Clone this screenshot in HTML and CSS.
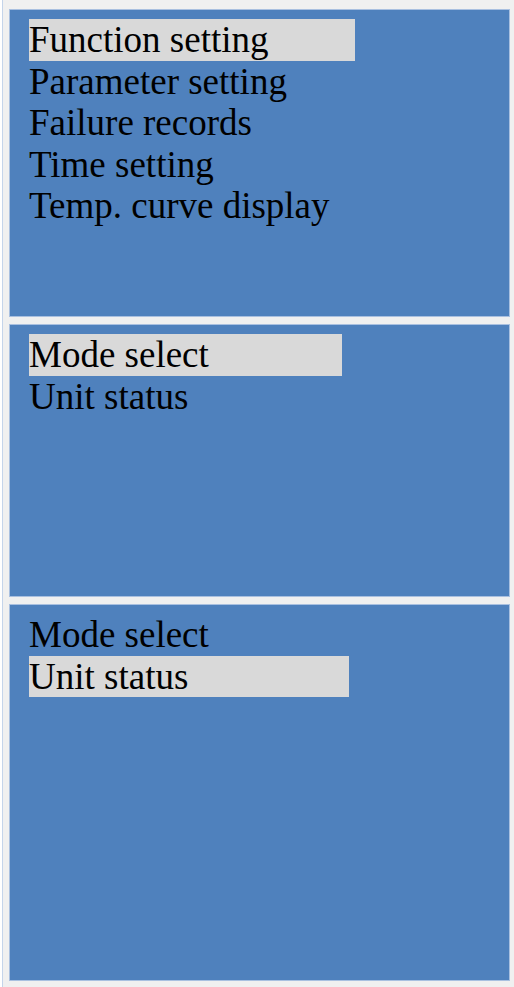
FILE: index.html
```html
<!DOCTYPE html>
<html lang="en">
<head>
    <meta charset="UTF-8">
    <meta name="viewport" content="width=device-width, initial-scale=1.0">
    <title>Controller Menu</title>
    <link rel="stylesheet" href="styles.css">
</head>
<body>
    <div class="frame">
        <div class="panel panel-main">
            <div class="item selected w-function">Function setting</div>
            <div class="item">Parameter setting</div>
            <div class="item">Failure records</div>
            <div class="item">Time setting</div>
            <div class="item">Temp. curve display</div>
        </div>
        <div class="panel panel-mode">
            <div class="item selected w-mode">Mode select</div>
            <div class="item">Unit status</div>
        </div>
        <div class="panel panel-status">
            <div class="item">Mode select</div>
            <div class="item selected w-status">Unit status</div>
        </div>
    </div>
</body>
</html>
```

FILE: styles.css
```css
html, body {
    margin: 0;
    padding: 0;
    background: #ffffff;
}
body {
    font-family: "Liberation Serif", "Times New Roman", serif;
    color: #000;
}
.frame {
    margin-left: 2px;
    border-left: 1px solid #c4d4ea;
    background: #f0f0f0;
    height: 987px;
    box-sizing: border-box;
    padding: 9px 4px 6px 6px;
    display: flex;
    flex-direction: column;
    gap: 7px;
}
.panel {
    background: #4f81bd;
    border: 1px solid #a9c0e0;
    box-sizing: border-box;
    padding: 9px 0 0 19px;
}
.panel-main {
    height: 308px;
}
.panel-mode {
    height: 273px;
}
.panel-status {
    height: 377px;
}
.item {
    font-size: 37px;
    line-height: 41.5px;
    white-space: nowrap;
}
.selected {
    background: #d9d9d9;
}
.w-function {
    width: 326px;
}
.w-mode {
    width: 313px;
}
.w-status {
    width: 320px;
}
```
